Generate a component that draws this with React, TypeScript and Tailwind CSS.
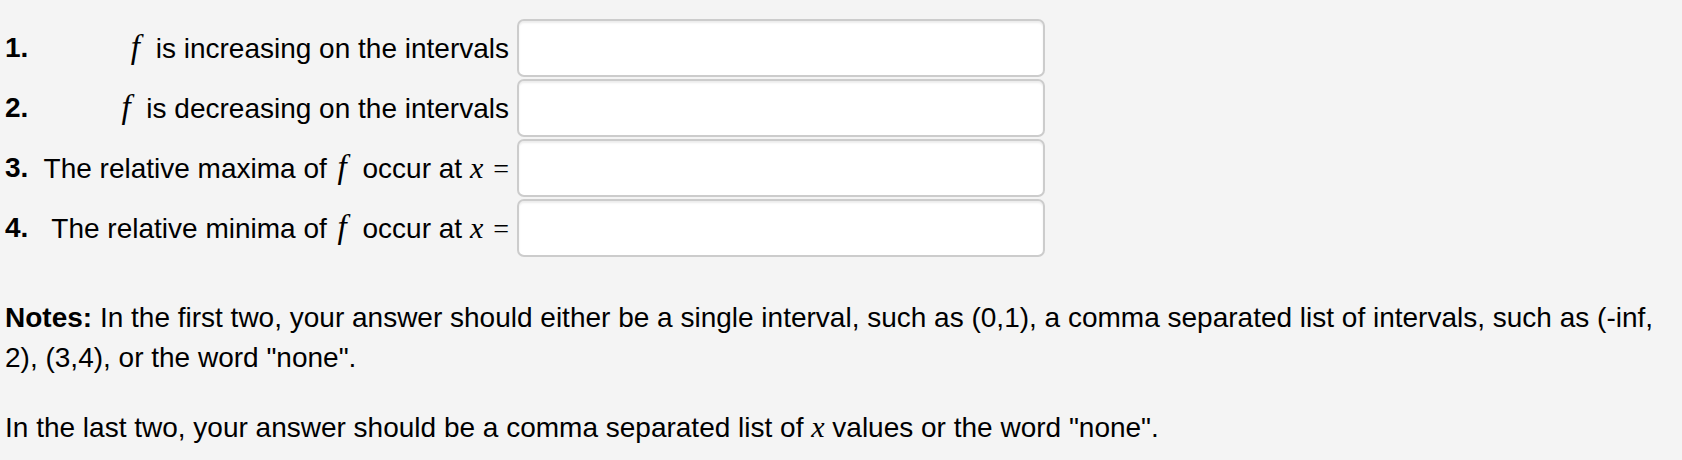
import React from "react";

// italic math letters, set in a serif face like the rendered TeX
const MathVar = ({ children }: { children: React.ReactNode }) => (
  <span className="font-['Liberation_Serif','Times_New_Roman',serif] text-[30px] italic">
    {children}
  </span>
);

// TeX's f is much wider than a text italic f, so pad it out
const F = () => (
  <span className="inline-block pl-[3px] pr-[8px] font-['Liberation_Serif','Times_New_Roman',serif] text-[33px] italic leading-[40px]">
    f
  </span>
);

const Eq = () => (
  <span className="ml-[10px] font-['Liberation_Serif','Times_New_Roman',serif] text-[28px]">
    =
  </span>
);

const questions: { num: string; label: React.ReactNode }[] = [
  {
    num: "1.",
    label: (
      <>
        <F /> is increasing on the intervals
      </>
    ),
  },
  {
    num: "2.",
    label: (
      <>
        <F /> is decreasing on the intervals
      </>
    ),
  },
  {
    num: "3.",
    label: (
      <>
        The relative maxima of <F /> occur at <MathVar>x</MathVar>
        <Eq />
      </>
    ),
  },
  {
    num: "4.",
    label: (
      <>
        The relative minima of <F /> occur at <MathVar>x</MathVar>
        <Eq />
      </>
    ),
  },
];

function App() {
  return (
    <div className="min-h-[460px] bg-[#f4f4f4] px-[5px] pt-[19px] font-['Liberation_Sans',Arial,Helvetica,sans-serif] text-[28px] leading-[40px] text-black">
      {/* Answer rows */}
      <div className="flex flex-col gap-[2px]">
        {questions.map((q) => (
          <div key={q.num} className="flex h-[58px] items-center">
            <span className="w-[35px] shrink-0 font-bold">{q.num}</span>
            <span className="w-[469px] shrink-0 whitespace-nowrap text-right">
              {q.label}
            </span>
            <input
              type="text"
              className="ml-[8px] h-[58px] w-[528px] shrink-0 rounded-[7px] border-2 border-[#cccccc] bg-white px-3 shadow-[inset_0_2px_2px_rgba(0,0,0,0.075)] outline-none"
            />
          </div>
        ))}
      </div>

      {/* Notes */}
      <p className="mt-[41px]">
        <span className="font-bold">Notes:</span> In the first two, your answer
        should either be a single interval, such as (0,1), a comma separated
        list of intervals, such as (-inf, 2), (3,4), or the word "none".
      </p>
      <p className="mt-[29px]">
        In the last two, your answer should be a comma separated list of{" "}
        <MathVar>x</MathVar> values or the word "none".
      </p>
    </div>
  );
}

export default App;
